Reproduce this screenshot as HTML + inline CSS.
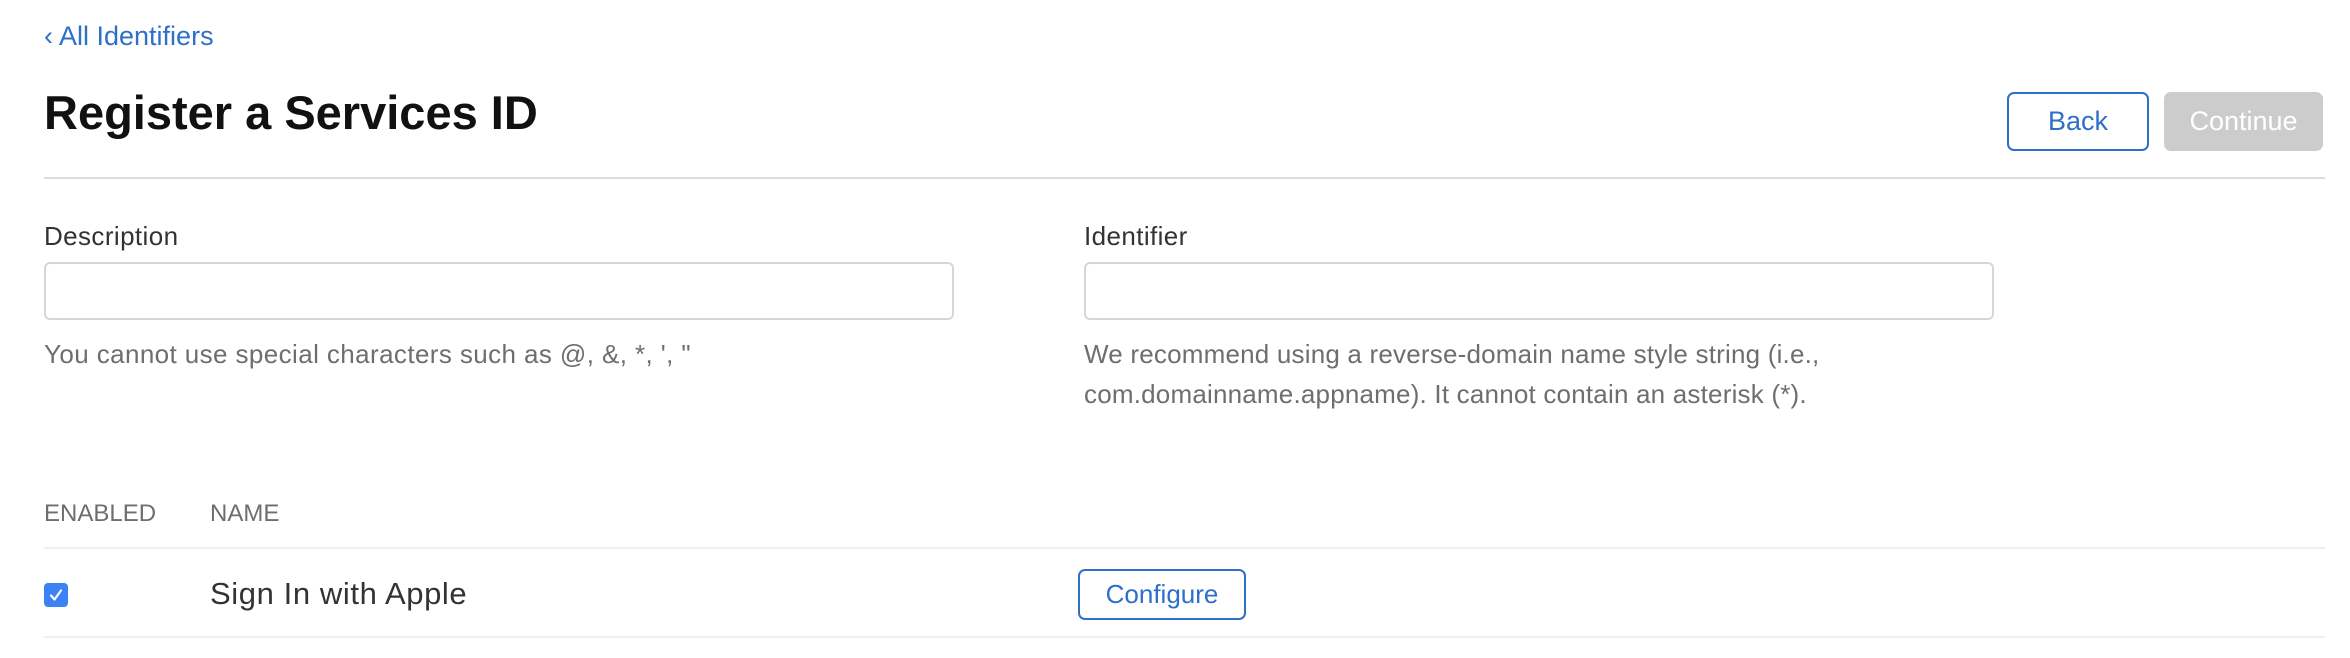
<!DOCTYPE html>
<html><head><meta charset="utf-8"><style>
*{margin:0;padding:0;box-sizing:border-box}
body{width:2350px;height:658px;background:#fff;font-family:"Liberation Sans",sans-serif;position:relative;overflow:hidden;color:#1d1d1f}
.a{position:absolute;white-space:nowrap}
.back{left:44px;top:21px;font-size:27px;color:#2d6fc9}
h1{position:absolute;left:44px;top:85px;font-size:47px;font-weight:bold;color:#111;letter-spacing:0}
.hr{position:absolute;left:44px;width:2281px;height:2px;background:#dcdcdc}
.btn{position:absolute;border-radius:7px;font-size:27px;display:flex;align-items:center;justify-content:center}
.lbl{font-size:26px;color:#333;letter-spacing:0.4px}
.inp{position:absolute;height:58px;border:2px solid #d6d6d6;border-radius:6px;width:910px;top:262px}
.help{font-size:26px;color:#6e6e6e;line-height:40px;letter-spacing:0.2px}
.th{font-size:24px;color:#6e6e6e}
.thin{position:absolute;left:44px;width:2281px;height:2px;background:#efefef}
</style></head><body>
<div class="a back">‹ All Identifiers</div>
<h1>Register a Services ID</h1>
<div class="btn" style="left:2007px;top:92px;width:142px;height:59px;border:2px solid #2d6fc9;color:#2d6fc9">Back</div>
<div class="btn" style="left:2164px;top:92px;width:159px;height:59px;background:#cccccc;color:#fff">Continue</div>
<div class="hr" style="top:177px"></div>
<div class="a lbl" style="left:44px;top:221px">Description</div>
<div class="inp" style="left:44px"></div>
<div class="a help" style="left:44px;top:334px;letter-spacing:0.4px">You cannot use special characters such as @, &amp;, *, ', "</div>
<div class="a lbl" style="left:1084px;top:221px">Identifier</div>
<div class="inp" style="left:1084px"></div>
<div class="a help" style="left:1084px;top:334px">We recommend using a reverse-domain name style string (i.e.,<br>com.domainname.appname). It cannot contain an asterisk (*).</div>
<div class="a th" style="left:44px;top:500px">ENABLED</div>
<div class="a th" style="left:210px;top:500px">NAME</div>
<div class="thin" style="top:547px"></div>
<div class="a" style="left:44px;top:583px;width:24px;height:24px;background:#3b82f6;border-radius:4px">
<svg width="24" height="24" viewBox="0 0 24 24"><path d="M7 12.5l3.5 4L17 7.5" stroke="#fff" stroke-width="2.2" fill="none" stroke-linecap="round" stroke-linejoin="round"/></svg></div>
<div class="a" style="left:210px;top:576px;font-size:31px;color:#333;letter-spacing:0.6px">Sign In with Apple</div>
<div class="btn" style="left:1078px;top:569px;width:168px;height:51px;border:2px solid #2d6fc9;color:#2d6fc9;font-size:26px">Configure</div>
<div class="thin" style="top:636px"></div>
</body></html>
